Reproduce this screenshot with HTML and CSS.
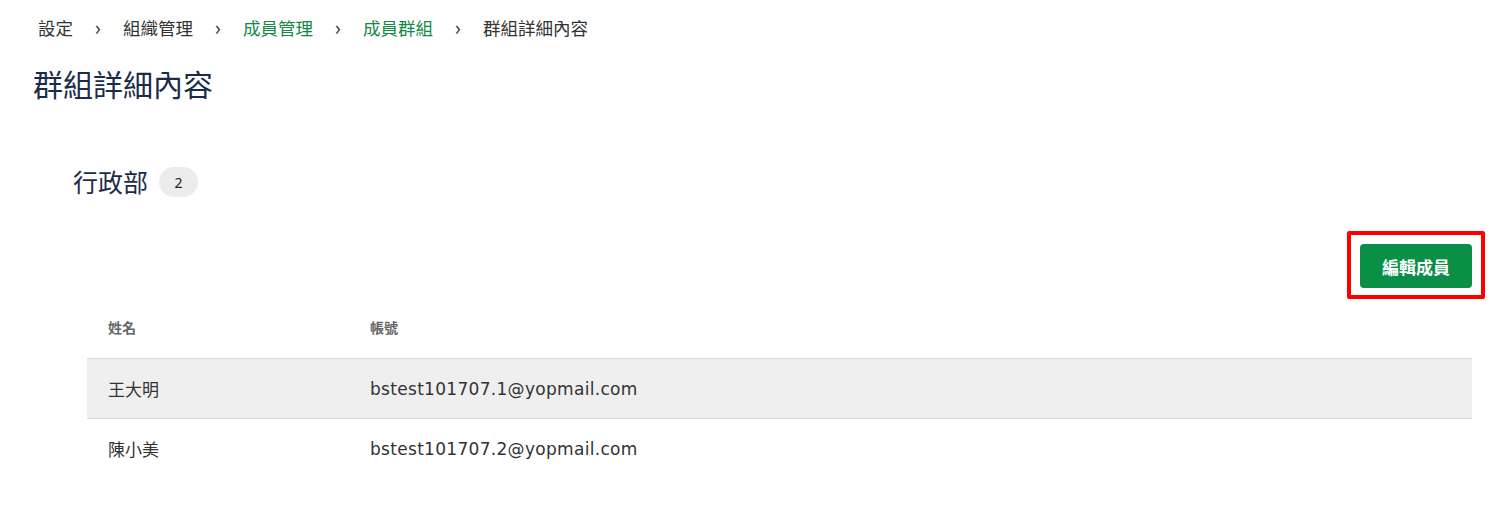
FILE: index.html
```html
<!DOCTYPE html>
<html lang="zh-Hant">
<head>
    <meta charset="UTF-8">
    <meta name="viewport" content="width=device-width, initial-scale=1.0">
    <title>群組詳細內容</title>
    <link rel="stylesheet" href="styles.css">
</head>
<body>
    <nav class="breadcrumb">
        <span class="crumb">設定</span>
        <span class="sep">›</span>
        <span class="crumb">組織管理</span>
        <span class="sep">›</span>
        <a class="crumb link" href="#">成員管理</a>
        <span class="sep">›</span>
        <a class="crumb link" href="#">成員群組</a>
        <span class="sep">›</span>
        <span class="crumb">群組詳細內容</span>
    </nav>

    <h1 class="page-title">群組詳細內容</h1>

    <section class="group">
        <div class="group-header">
            <h2 class="group-name">行政部</h2>
            <span class="count-badge">2</span>
        </div>

        <div class="toolbar">
            <div class="highlight">
                <button class="btn-primary">編輯成員</button>
            </div>
        </div>

        <table class="member-table">
            <thead>
                <tr>
                    <th class="col-name">姓名</th>
                    <th>帳號</th>
                </tr>
            </thead>
            <tbody>
                <tr class="shaded">
                    <td class="col-name">王大明</td>
                    <td class="email">bstest101707.1@yopmail.com</td>
                </tr>
                <tr>
                    <td class="col-name">陳小美</td>
                    <td class="email">bstest101707.2@yopmail.com</td>
                </tr>
            </tbody>
        </table>
    </section>
</body>
</html>
```

FILE: styles.css
```css
body {
    margin: 0;
    font-family: "Noto Sans", "Noto Sans CJK TC", sans-serif;
    color: #333;
    background: #fff;
}

/* breadcrumb */
.breadcrumb {
    display: flex;
    align-items: center;
    padding: 15px 0 0 38px;
    font-size: 17.5px;
    line-height: 26px;
}

.crumb {
    color: #333;
    text-decoration: none;
}

.crumb.link {
    color: #128a45;
}

.sep {
    width: 50px;
    text-align: center;
    font-size: 19px;
    color: #444;
}

.page-title {
    margin: 24px 0 0 33px;
    font-size: 30px;
    font-weight: 400;
    line-height: 40px;
    color: #1b2c4a;
}

/* group block */
.group {
    padding: 62px 34px 0 73px;
}

.group-header {
    display: flex;
    align-items: center;
    gap: 11px;
}

.group-name {
    margin: 0;
    font-size: 25px;
    font-weight: 400;
    line-height: 30px;
    color: #1b2c4a;
}

.count-badge {
    display: inline-flex;
    align-items: center;
    justify-content: center;
    width: 39px;
    height: 30px;
    border-radius: 15px;
    background: #ececec;
    font-size: 14px;
    color: #222;
}

.toolbar {
    display: flex;
    justify-content: flex-end;
    margin-top: 34px;
    margin-right: -13px;
}

.highlight {
    border: 4px solid #f00;
    border-radius: 2px;
    padding: 9px 9px 7px 9px;
}

.btn-primary {
    display: block;
    width: 112px;
    height: 44px;
    border: none;
    border-radius: 4px;
    background: #0a8f47;
    color: #fff;
    font-family: inherit;
    font-size: 17px;
    font-weight: 600;
    cursor: pointer;
}

/* members table */
.member-table {
    width: calc(100% - 14px);
    margin: -4px 0 0 14px;
    border-collapse: collapse;
}

.member-table th {
    text-align: left;
    font-size: 14px;
    font-weight: 700;
    color: #666;
    height: 63px;
    padding: 0 0 0 21px;
    border-bottom: 1px solid #d6d6d6;
}

.member-table td {
    height: 59px;
    padding: 0 0 0 21px;
    font-size: 17px;
    color: #333;
}

.member-table .col-name {
    width: 241px;
}

.member-table tr.shaded td {
    background: #efefef;
    border-bottom: 1px solid #d6d6d6;
}

.email {
    font-family: "DejaVu Sans", "Open Sans", sans-serif;
    letter-spacing: 0.3px;
}
```
